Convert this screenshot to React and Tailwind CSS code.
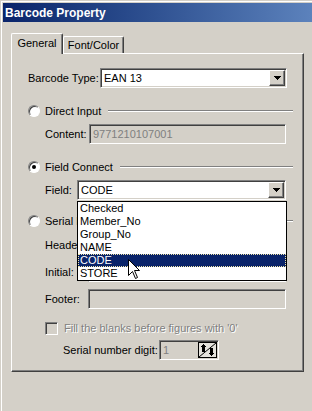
import React from 'react';

const RAISED = 'border border-t-white border-l-white border-r-[#404040] border-b-[#404040] shadow-[inset_-1px_-1px_#808080,inset_1px_1px_#d4d0c8]';
const SUNKEN = 'border border-t-[#808080] border-l-[#808080] border-r-white border-b-white shadow-[inset_1px_1px_#404040,inset_-1px_-1px_#d4d0c8]';
const DISABLED_TEXT = 'text-[#808080] [text-shadow:1px_1px_0_#fff]';

const FIELDS = ['Checked', 'Member_No', 'Group_No', 'NAME', 'CODE', 'STORE'];

const DropArrow = () => (
  <svg width="7" height="4" viewBox="0 0 7 4" shapeRendering="crispEdges">
    <path d="M0 0h7v1H0z M1 1h5v1H1z M2 2h3v1H2z M3 3h1v1H3z" fill="#000" />
  </svg>
);

const Combo = ({ value, className = '' }) => (
  <div className={`h-[20px] bg-white ${SUNKEN} flex items-center ${className}`}>
    <span className="flex-1 pl-[3px] leading-none">{value}</span>
    <div className={`w-[16px] h-[16px] mr-px bg-[#d4d0c8] ${RAISED} flex items-center justify-center`}>
      <DropArrow />
    </div>
  </div>
);

const TextBox = ({ value, disabled, className = '' }) => (
  <div className={`h-[20px] ${disabled ? 'bg-[#d4d0c8] text-[#808080]' : 'bg-white'} ${SUNKEN} flex items-center pl-[3px] leading-none ${className}`}>
    {value}
  </div>
);

const Radio = ({ checked }) => (
  <div className="w-[12px] h-[12px] shrink-0 rounded-full bg-white border border-t-[#808080] border-l-[#808080] border-r-white border-b-white shadow-[inset_1px_1px_#404040] flex items-center justify-center">
    {checked && <div className="w-[4px] h-[4px] rounded-full bg-black" />}
  </div>
);

const GroupHead = ({ label, checked, className = '' }) => (
  <div className={`flex items-center h-[14px] ${className}`}>
    <Radio checked={checked} />
    <span className="ml-[5px] mr-[7px] leading-none">{label}</span>
    <div className="flex-1 h-[2px] border-t border-t-[#808080] border-b border-b-white" />
  </div>
);

const SpinIcon = () => (
  <svg width="19" height="16" viewBox="0 0 19 16" shapeRendering="crispEdges">
    <rect x="0.5" y="0.5" width="18" height="15" fill="#e4e2dc" stroke="#000" />
    <path d="M1 15L18 1" stroke="#000" strokeWidth="1" shapeRendering="auto" />
    <path d="M5 2h1v1H5z M4 3h3v1H4z M3 4h5v1H3z M4 5h3v5H4z" fill="#000" />
    <path d="M12 6h3v5h-3z M11 11h5v1h-5z M12 12h3v1h-3z M13 13h1v1h-1z" fill="#000" />
  </svg>
);

const Cursor = () => (
  <svg width="13" height="21" viewBox="0 0 13 21">
    <path d="M0.5 0.5V16.5L4.5 12.5L7.5 19.5L9.5 18.5L6.5 11.5H11.5Z" fill="#fff" stroke="#000" strokeWidth="1" strokeLinejoin="miter" />
  </svg>
);

export default function App() {
  return (
    <div className="w-[312px] h-[411px] bg-[#d4d0c8] overflow-hidden pt-px pl-px font-['Liberation_Sans',Arial,sans-serif] text-[11px] text-black">
      <div className="h-full border-l border-t border-white pt-px pl-px">
        {/* Title bar */}
        <div className="h-[19px] bg-linear-to-r from-[#0a246a] to-[#5c82bc] flex items-center pl-[2px]">
          <span className="text-white font-bold text-[12px] leading-none">Barcode Property</span>
        </div>

        {/* Tabs */}
        <div className="flex items-end h-[20px] mt-[11px] ml-[8px]">
          <div className="relative z-10 w-[52px] h-[21px] -mb-px bg-[#d4d0c8] rounded-t-[2px] border-l border-t border-white border-r border-r-[#404040] shadow-[inset_-1px_0_#808080] flex items-center justify-center pb-[2px]">
            <span className="leading-none">General</span>
          </div>
          <div className="w-[61px] h-[17px] bg-[#d4d0c8] rounded-t-[2px] border-l border-t border-white border-r border-r-[#404040] shadow-[inset_-1px_0_#808080] flex items-center justify-center">
            <span className="leading-none">Font/Color</span>
          </div>
        </div>

        {/* Panel */}
        <div className={`ml-[8px] w-[293px] h-[319px] ${RAISED} pl-[16px] pr-[10px] pt-[14px]`}>
          <div className="flex items-center h-[20px]">
            <span className="w-[72px] leading-none">Barcode Type:</span>
            <Combo value="EAN 13" className="w-[187px]" />
          </div>

          <GroupHead label="Direct Input" className="mt-[16px]" />
          <div className="flex items-center mt-[6px] ml-[17px]">
            <span className="w-[44px] leading-none">Content:</span>
            <TextBox value="9771210107001" disabled className="w-[197px]" />
          </div>

          <GroupHead label="Field Connect" checked className="mt-[16px]" />
          <div className="flex items-center mt-[6px] ml-[17px]">
            <span className="w-[32px] leading-none">Field:</span>
            <div className="relative">
              <Combo value="CODE" className="w-[209px]" />
              <div className="absolute z-20 left-0 top-[21px] w-[210px] h-[80px] bg-white border border-black">
                {FIELDS.map(f =>
                  f === 'CODE' ? (
                    <div key={f} className="h-[13px] bg-[#0a246a] text-white border border-dotted border-[#f0e6a8] pl-px flex items-center leading-none">
                      {f}
                    </div>
                  ) : (
                    <div key={f} className="h-[13px] pl-[2px] flex items-center leading-none">{f}</div>
                  )
                )}
              </div>
              <div className="absolute z-30 left-[51px] top-[79px]">
                <Cursor />
              </div>
            </div>
          </div>

          <GroupHead label="Serial Number" className="mt-[14px]" />
          <div className="flex items-center mt-[7px] ml-[17px]">
            <span className="w-[43px] leading-none">Header:</span>
            <TextBox disabled className="w-[198px]" />
          </div>
          <div className="flex items-center mt-[7px] ml-[17px]">
            <span className="w-[43px] leading-none">Initial:</span>
            <TextBox disabled className="w-[198px]" />
          </div>
          <div className="flex items-center mt-[7px] ml-[17px]">
            <span className="w-[43px] leading-none">Footer:</span>
            <TextBox disabled className="w-[198px]" />
          </div>

          <div className="flex items-center h-[14px] mt-[12px] ml-[17px]">
            <div className={`w-[13px] h-[13px] bg-[#d4d0c8] ${SUNKEN}`} />
            <span className={`ml-[6px] leading-none ${DISABLED_TEXT}`}>Fill the blanks before figures with '0'</span>
          </div>

          <div className="flex items-center mt-[5px] ml-[35px]">
            <span className="w-[96px] leading-none">Serial number digit:</span>
            <div className={`w-[60px] h-[20px] bg-[#d4d0c8] ${SUNKEN} flex items-center pl-[3px] pr-px text-[#808080]`}>
              <span className="flex-1 leading-none">1</span>
              <SpinIcon />
            </div>
          </div>
        </div>
      </div>
    </div>
  );
}
